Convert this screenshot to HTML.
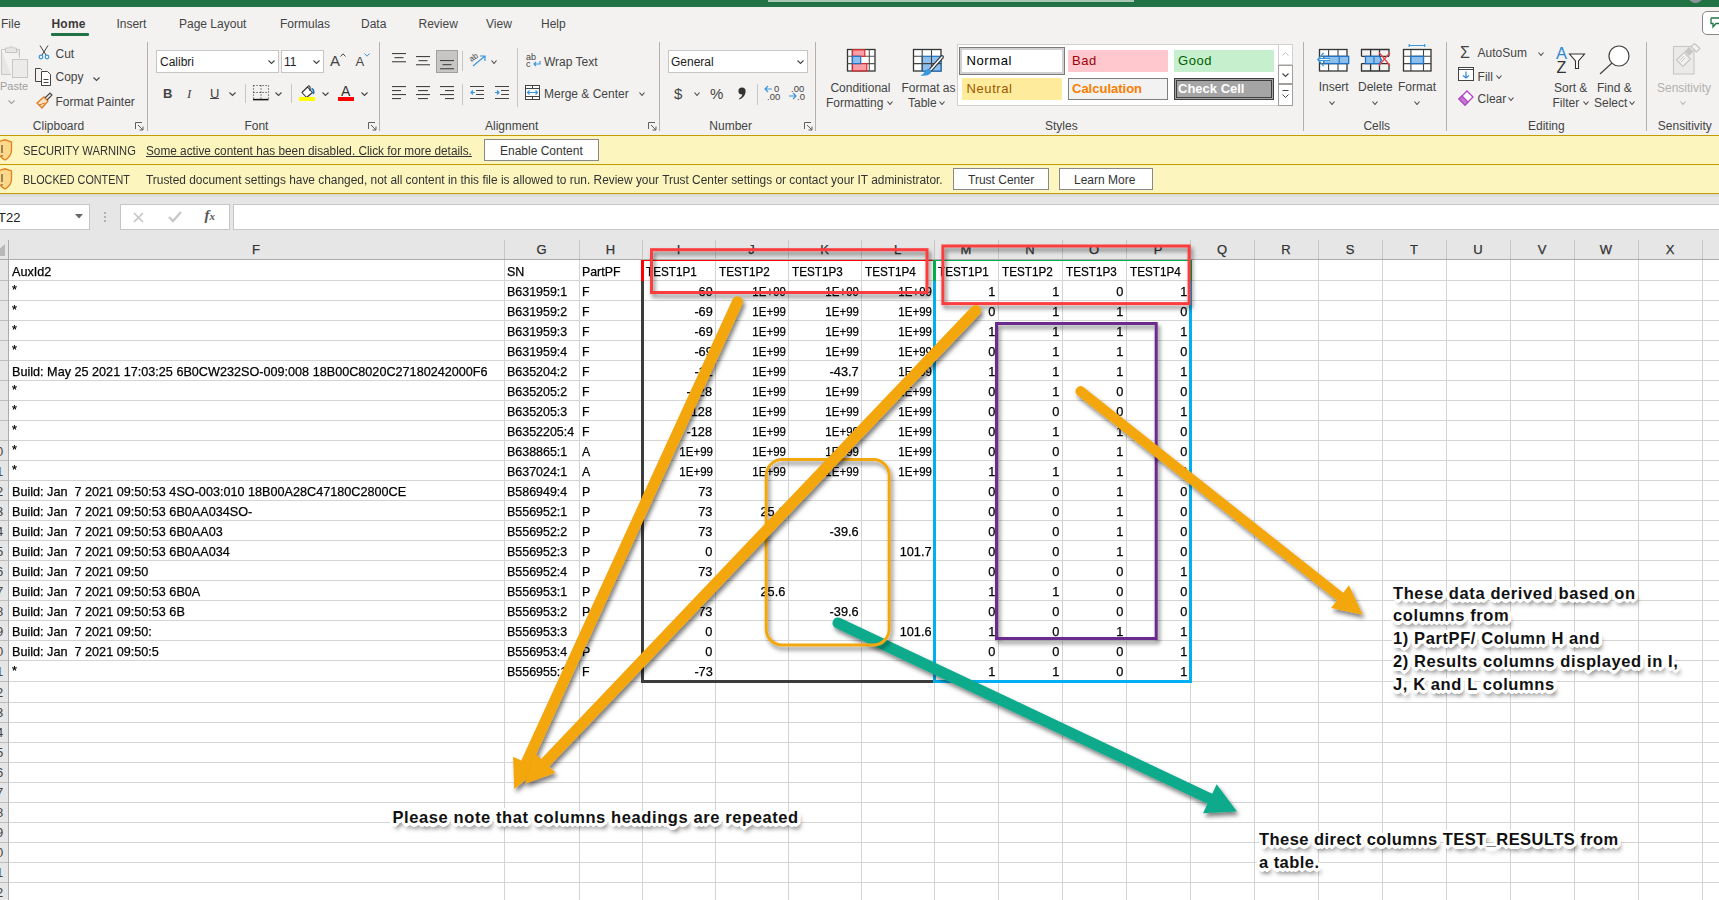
<!DOCTYPE html><html><head><meta charset="utf-8"><style>
*{margin:0;padding:0;box-sizing:border-box}
html,body{width:1719px;height:900px;overflow:hidden;background:#fff;font-family:"Liberation Sans",sans-serif}
.t{position:absolute;white-space:nowrap;line-height:1}
.g{-webkit-text-stroke:0.25px currentColor}
.r{position:absolute}
svg{position:absolute;overflow:visible}
</style></head><body><div class="r" style="left:0px;top:0px;width:1719px;height:7px;background:#217346"></div>
<div class="r" style="left:768px;top:0px;width:366px;height:2px;background:#a9c7b4"></div>
<div class="r" style="left:0px;top:7px;width:1719px;height:1px;background:#fbfbfb"></div>
<div class="r" style="left:1688px;top:-12px;width:15px;height:15px;background:#8d949a;border-radius:50%"></div>
<div class="r" style="left:0px;top:7px;width:1719px;height:128px;background:#f3f2f1"></div>
<div class="t" style="left:1.0px;top:17.8px;font-size:12px;color:#444;font-weight:normal;">File</div>
<div class="t" style="left:51.5px;top:17.8px;font-size:12px;color:#3b3a39;font-weight:bold;letter-spacing:0.2px">Home</div>
<div class="t" style="left:116.4px;top:17.8px;font-size:12px;color:#444;font-weight:normal;">Insert</div>
<div class="t" style="left:179.0px;top:17.8px;font-size:12px;color:#444;font-weight:normal;">Page Layout</div>
<div class="t" style="left:280.0px;top:17.8px;font-size:12px;color:#444;font-weight:normal;">Formulas</div>
<div class="t" style="left:361.0px;top:17.8px;font-size:12px;color:#444;font-weight:normal;">Data</div>
<div class="t" style="left:418.5px;top:17.8px;font-size:12px;color:#444;font-weight:normal;">Review</div>
<div class="t" style="left:486.0px;top:17.8px;font-size:12px;color:#444;font-weight:normal;">View</div>
<div class="t" style="left:541.0px;top:17.8px;font-size:12px;color:#444;font-weight:normal;">Help</div>
<div class="r" style="left:51px;top:33px;width:38px;height:3px;background:#217346;border-radius:1px"></div>
<div class="r" style="left:1702px;top:11px;width:30px;height:24px;background:#fff;border:1.5px solid #8a8886;border-radius:5px"></div>
<svg style="left:1710px;top:17px" width="12" height="12"><path d="M1 1H12M1 1V6.5H3V10L6 6.5H12" stroke="#217346" stroke-width="1.3" fill="none"/></svg>
<div class="r" style="left:147px;top:42px;width:1px;height:89px;background:#b3b0ad"></div>
<div class="r" style="left:379px;top:42px;width:1px;height:89px;background:#b3b0ad"></div>
<div class="r" style="left:659px;top:42px;width:1px;height:89px;background:#b3b0ad"></div>
<div class="r" style="left:815px;top:42px;width:1px;height:89px;background:#b3b0ad"></div>
<div class="r" style="left:1303px;top:42px;width:1px;height:89px;background:#b3b0ad"></div>
<div class="r" style="left:1446px;top:42px;width:1px;height:89px;background:#b3b0ad"></div>
<div class="r" style="left:1646px;top:42px;width:1px;height:89px;background:#b3b0ad"></div>
<div class="t" style="left:32.8px;top:119.8px;font-size:12px;color:#444;font-weight:normal;">Clipboard</div>
<div class="t" style="left:244.4px;top:119.8px;font-size:12px;color:#444;font-weight:normal;">Font</div>
<div class="t" style="left:485.0px;top:119.8px;font-size:12px;color:#444;font-weight:normal;">Alignment</div>
<div class="t" style="left:709.3px;top:119.8px;font-size:12px;color:#444;font-weight:normal;">Number</div>
<div class="t" style="left:1045.0px;top:119.8px;font-size:12px;color:#444;font-weight:normal;">Styles</div>
<div class="t" style="left:1363.4px;top:119.8px;font-size:12px;color:#444;font-weight:normal;">Cells</div>
<div class="t" style="left:1528.0px;top:119.8px;font-size:12px;color:#444;font-weight:normal;">Editing</div>
<div class="t" style="left:1657.8px;top:119.8px;font-size:12px;color:#444;font-weight:normal;">Sensitivity</div>
<svg style="left:135px;top:122px" width="9" height="9"><path d="M0.5 0.5H7M0.5 0.5V7M3 3L8 8M8 4.5V8H4.5" stroke="#605e5c" fill="none" stroke-width="1"/></svg>
<svg style="left:368px;top:122px" width="9" height="9"><path d="M0.5 0.5H7M0.5 0.5V7M3 3L8 8M8 4.5V8H4.5" stroke="#605e5c" fill="none" stroke-width="1"/></svg>
<svg style="left:648px;top:122px" width="9" height="9"><path d="M0.5 0.5H7M0.5 0.5V7M3 3L8 8M8 4.5V8H4.5" stroke="#605e5c" fill="none" stroke-width="1"/></svg>
<svg style="left:803.5px;top:122px" width="9" height="9"><path d="M0.5 0.5H7M0.5 0.5V7M3 3L8 8M8 4.5V8H4.5" stroke="#605e5c" fill="none" stroke-width="1"/></svg>
<svg style="left:0px;top:45px" width="30" height="33"><path d="M1.5 4.5H6M15 4.5H19.5V13M1.5 4.5V29.5H11" stroke="#c8c6c4" fill="#e8e6e4" stroke-width="1"/><path d="M5.5 7.5V3H8.5Q11 0 13.5 3H16.5V7.5Z" stroke="#c8c6c4" fill="#e8e6e4"/><rect x="12.5" y="14.5" width="15" height="18" stroke="#c8c6c4" fill="#edebe9"/></svg>
<div class="t" style="left:0.0px;top:81.2px;font-size:11px;color:#a19f9d;font-weight:normal;">Paste</div>
<svg style="left:8px;top:100px" width="7" height="4"><path d="M0.5 0.5L3.5 3.5L6.5 0.5" stroke="#a19f9d" fill="none" stroke-width="1.1"/></svg>
<svg style="left:38px;top:45px" width="12" height="15"><path d="M2 0.5L8 10M10 0.5L4 10" stroke="#444" stroke-width="1" fill="none"/><circle cx="3" cy="12" r="1.8" stroke="#3a96dd" fill="none" stroke-width="1.2"/><circle cx="9" cy="12" r="1.8" stroke="#3a96dd" fill="none" stroke-width="1.2"/></svg>
<div class="t" style="left:55.5px;top:47.8px;font-size:12px;color:#444;font-weight:normal;">Cut</div>
<svg style="left:35px;top:68px" width="18" height="18"><path d="M0.5 0.5H5.5L7 2M0.5 0.5V13.5H6" stroke="#444" fill="none"/><path d="M6.5 3.5H12.5L15.5 6.5V17.5H6.5Z" stroke="#444" fill="#fff"/><path d="M8.5 11.5H13.5M8.5 14.5H13.5" stroke="#444"/></svg>
<div class="t" style="left:55.5px;top:71.3px;font-size:12px;color:#444;font-weight:normal;">Copy</div>
<svg style="left:93px;top:77px" width="7" height="4"><path d="M0.5 0.5L3.5 3.5L6.5 0.5" stroke="#444" fill="none" stroke-width="1.1"/></svg>
<svg style="left:36px;top:92px" width="17" height="17"><path d="M1 11L8 5L12 9L6 16Z" fill="#fbe3c8" stroke="#e07a1f" stroke-width="1.3"/><path d="M3 13L9 11" stroke="#e07a1f"/><path d="M9 6L14 1L16 3L11 8" stroke="#444" fill="none" stroke-width="1.1"/></svg>
<div class="t" style="left:55.5px;top:95.8px;font-size:12px;color:#444;font-weight:normal;">Format Painter</div>
<div class="r" style="left:156px;top:50px;width:123px;height:23px;background:#fff;border:1px solid #c8c6c4"></div>
<div class="t" style="left:160.0px;top:55.8px;font-size:12px;color:#222;font-weight:normal;">Calibri</div>
<svg style="left:268px;top:60px" width="7" height="4"><path d="M0.5 0.5L3.5 3.5L6.5 0.5" stroke="#444" fill="none" stroke-width="1.1"/></svg>
<div class="r" style="left:281px;top:50px;width:43px;height:23px;background:#fff;border:1px solid #c8c6c4"></div>
<div class="t" style="left:284.0px;top:55.8px;font-size:12px;color:#222;font-weight:normal;">11</div>
<svg style="left:313px;top:60px" width="7" height="4"><path d="M0.5 0.5L3.5 3.5L6.5 0.5" stroke="#444" fill="none" stroke-width="1.1"/></svg>
<div class="t" style="left:330.0px;top:53.3px;font-size:15px;color:#444;font-weight:normal;">A</div>
<svg style="left:340px;top:53px" width="6" height="4"><path d="M0.5 3.5L3 0.8L5.5 3.5" stroke="#444" fill="none"/></svg>
<div class="t" style="left:355.5px;top:55.0px;font-size:13px;color:#444;font-weight:normal;">A</div>
<svg style="left:364px;top:53px" width="6" height="4"><path d="M0.5 0.5L3 3.2L5.5 0.5" stroke="#3a96dd" fill="none"/></svg>
<div class="t" style="left:163.0px;top:87.0px;font-size:13px;color:#444;font-weight:bold;">B</div>
<div class="t" style="left:187.0px;top:87.0px;font-size:13px;color:#444;font-weight:normal;font-style:italic;font-family:'Liberation Serif',serif">I</div>
<div class="t" style="left:210.0px;top:87.0px;font-size:13px;color:#444;font-weight:normal;">U</div>
<div class="r" style="left:210px;top:98px;width:9px;height:1px;background:#444"></div>
<svg style="left:229px;top:92px" width="7" height="4"><path d="M0.5 0.5L3.5 3.5L6.5 0.5" stroke="#444" fill="none" stroke-width="1.1"/></svg>
<div class="r" style="left:245px;top:84px;width:1px;height:19px;background:#c8c6c4"></div>
<svg style="left:253px;top:85px" width="16" height="17"><path d="M0.5 0.5H15.5V13.5M0.5 0.5V13.5M8 0.5V13.5M0.5 7.5H15.5" stroke="#333" stroke-dasharray="1.1 1.9" fill="none" stroke-width="1.1"/><path d="M0 14.6H15.5" stroke="#111" stroke-width="1.5"/></svg>
<svg style="left:275px;top:92px" width="7" height="4"><path d="M0.5 0.5L3.5 3.5L6.5 0.5" stroke="#444" fill="none" stroke-width="1.1"/></svg>
<div class="r" style="left:291px;top:84px;width:1px;height:19px;background:#c8c6c4"></div>
<svg style="left:299px;top:84px" width="17" height="18"><path d="M3 8.5L8.5 3L13.5 8.5L7.5 13.5Z" stroke="#333" fill="#fff" stroke-width="1.1" stroke-linejoin="round"/><path d="M8.5 3Q10 0.5 11 3V7" stroke="#333" fill="none" stroke-width="1.1"/><path d="M12.5 4.5Q15.5 6 14.5 10" stroke="#1f72c4" stroke-width="1.6" fill="none"/><rect x="0" y="13" width="16" height="4" fill="#ffff00"/></svg>
<svg style="left:321.5px;top:92px" width="7" height="4"><path d="M0.5 0.5L3.5 3.5L6.5 0.5" stroke="#444" fill="none" stroke-width="1.1"/></svg>
<div class="t" style="left:341.0px;top:83.6px;font-size:14px;color:#333;font-weight:normal;">A</div>
<div class="r" style="left:338px;top:97px;width:16px;height:4px;background:#ff0000"></div>
<svg style="left:360.5px;top:92px" width="7" height="4"><path d="M0.5 0.5L3.5 3.5L6.5 0.5" stroke="#444" fill="none" stroke-width="1.1"/></svg>
<svg style="left:392px;top:53px" width="16" height="16"><rect x="0" y="0.0" width="14" height="1.1" fill="#444"/><rect x="2.5" y="4.1" width="9" height="1.1" fill="#444"/><rect x="0" y="8.2" width="14" height="1.1" fill="#444"/></svg>
<svg style="left:416px;top:56px" width="16" height="16"><rect x="0" y="0.0" width="14" height="1.1" fill="#444"/><rect x="2.5" y="4.1" width="9" height="1.1" fill="#444"/><rect x="0" y="8.2" width="14" height="1.1" fill="#444"/></svg>
<div class="r" style="left:436px;top:50px;width:22px;height:23px;background:#c8c6c4;border:1px solid #a19f9d"></div>
<svg style="left:440px;top:60px" width="16" height="16"><rect x="0" y="0.0" width="14" height="1.1" fill="#444"/><rect x="2.5" y="4.1" width="9" height="1.1" fill="#444"/><rect x="0" y="8.2" width="14" height="1.1" fill="#444"/></svg>
<div class="r" style="left:462px;top:51px;width:1px;height:20px;background:#c8c6c4"></div>
<svg style="left:470px;top:51px" width="17" height="17"><text x="0" y="9" font-size="8" fill="#444" transform="rotate(-35 4 8)" font-family="Liberation Sans">ab</text><path d="M3 15L15 5M10 5H15V10" stroke="#3a96dd" stroke-width="1.2" fill="none"/></svg>
<svg style="left:491px;top:60px" width="6" height="4"><path d="M0.5 0.5L3.0 3.5L5.5 0.5" stroke="#444" fill="none" stroke-width="1.1"/></svg>
<div class="r" style="left:517px;top:48px;width:1px;height:59px;background:#c8c6c4"></div>
<svg style="left:526px;top:52px" width="16" height="18"><text x="0" y="8" font-size="9" fill="#444" font-family="Liberation Sans">ab</text><text x="0" y="15" font-size="9" fill="#444" font-family="Liberation Sans">c</text><path d="M14 9V12H8M10 10L8 12L10 14" stroke="#3a96dd" stroke-width="1.2" fill="none"/></svg>
<div class="t" style="left:544.0px;top:56.3px;font-size:12px;color:#444;font-weight:normal;">Wrap Text</div>
<svg style="left:392px;top:86px" width="16" height="16"><rect x="0" y="0" width="14" height="1.1" fill="#444"/><rect x="0" y="4" width="9" height="1.1" fill="#444"/><rect x="0" y="8" width="14" height="1.1" fill="#444"/><rect x="0" y="12" width="9" height="1.1" fill="#444"/></svg>
<svg style="left:416px;top:86px" width="16" height="16"><rect x="0" y="0" width="14" height="1.1" fill="#444"/><rect x="2" y="4" width="10" height="1.1" fill="#444"/><rect x="0" y="8" width="14" height="1.1" fill="#444"/><rect x="2" y="12" width="10" height="1.1" fill="#444"/></svg>
<svg style="left:440px;top:86px" width="16" height="16"><rect x="0" y="0" width="14" height="1.1" fill="#444"/><rect x="5" y="4" width="9" height="1.1" fill="#444"/><rect x="0" y="8" width="14" height="1.1" fill="#444"/><rect x="5" y="12" width="9" height="1.1" fill="#444"/></svg>
<div class="r" style="left:462px;top:84px;width:1px;height:21px;background:#c8c6c4"></div>
<svg style="left:470px;top:86px" width="16" height="16"><path d="M0 0.5H14M6 4.5H14M6 8.5H14M0 12.5H14" stroke="#444"/><path d="M5 6.5H1M3 4.5L1 6.5L3 8.5" stroke="#3a96dd" fill="none" stroke-width="1.2"/></svg>
<svg style="left:495px;top:86px" width="16" height="16"><path d="M0 0.5H14M6 4.5H14M6 8.5H14M0 12.5H14" stroke="#444"/><path d="M0 6.5H4M2 4.5L4 6.5L2 8.5" stroke="#3a96dd" fill="none" stroke-width="1.2"/></svg>
<svg style="left:525px;top:85px" width="16" height="16"><rect x="0.5" y="0.5" width="14" height="14" stroke="#444" fill="#fff"/><path d="M0.5 3.5H14.5M0.5 11.5H14.5M7.5 0.5V3.5M7.5 11.5V14.5" stroke="#444"/><path d="M2.5 7.5H12.5M4.5 5.5L2.5 7.5L4.5 9.5M10.5 5.5L12.5 7.5L10.5 9.5" stroke="#3a96dd" fill="none" stroke-width="1.2"/></svg>
<div class="t" style="left:544.0px;top:88.3px;font-size:12px;color:#444;font-weight:normal;">Merge &amp; Center</div>
<svg style="left:639px;top:92px" width="6" height="4"><path d="M0.5 0.5L3.0 3.5L5.5 0.5" stroke="#444" fill="none" stroke-width="1.1"/></svg>
<div class="r" style="left:668px;top:50px;width:140px;height:23px;background:#fff;border:1px solid #c8c6c4"></div>
<div class="t" style="left:671.0px;top:55.8px;font-size:12px;color:#222;font-weight:normal;">General</div>
<svg style="left:797px;top:60px" width="7" height="4"><path d="M0.5 0.5L3.5 3.5L6.5 0.5" stroke="#444" fill="none" stroke-width="1.1"/></svg>
<div class="t" style="left:674.0px;top:86.3px;font-size:15px;color:#444;font-weight:normal;">$</div>
<svg style="left:694px;top:92px" width="6" height="4"><path d="M0.5 0.5L3.0 3.5L5.5 0.5" stroke="#444" fill="none" stroke-width="1.1"/></svg>
<div class="t" style="left:710.0px;top:86.3px;font-size:15px;color:#444;font-weight:normal;">%</div>
<svg style="left:737px;top:86px" width="10" height="14"><circle cx="5" cy="5" r="3.6" fill="#333"/><path d="M8.4 5.5Q8.5 11 2.5 13.5L2 12.5Q5.5 10.5 5.5 7Z" fill="#333"/></svg>
<div class="r" style="left:757px;top:84px;width:1px;height:21px;background:#c8c6c4"></div>
<svg style="left:764px;top:84px" width="17" height="17"><path d="M8 5H1M4 2L1 5L4 8" stroke="#3a96dd" fill="none" stroke-width="1.2"/><text x="10" y="8" font-size="9.5" fill="#444" font-family="Liberation Sans">0</text><text x="3" y="16" font-size="9.5" fill="#444" font-family="Liberation Sans">.00</text></svg>
<svg style="left:789px;top:84px" width="17" height="17"><text x="2" y="8" font-size="9.5" fill="#444" font-family="Liberation Sans">.00</text><path d="M0 12H7M4 9L7 12L4 15" stroke="#3a96dd" fill="none" stroke-width="1.2"/><text x="8" y="16" font-size="9.5" fill="#444" font-family="Liberation Sans">.0</text></svg>
<svg style="left:846px;top:48px" width="31" height="25"><rect x="1.5" y="1.5" width="27.5" height="21.5" fill="#fff" stroke="#333" stroke-width="1.3"/><path d="M1.5 8.3H29M1.5 15.6H29M23.3 1.5V23M6.2 1.5V23" stroke="#555" stroke-width="1.1" fill="none"/><rect x="6.5" y="1.8" width="12.3" height="6.5" fill="#f8a0a6" stroke="#e02a2a" stroke-width="1.2"/><rect x="6.5" y="15.6" width="14.3" height="7.2" fill="#f8a0a6" stroke="#e02a2a" stroke-width="1.2"/><rect x="6.5" y="8.3" width="8.2" height="7.3" fill="#8ec0ee" stroke="#1f72c4" stroke-width="1.2"/></svg>
<div class="t" style="left:830.4px;top:81.5px;font-size:12px;color:#444;font-weight:normal;">Conditional</div>
<div class="t" style="left:826.0px;top:96.8px;font-size:12px;color:#444;font-weight:normal;">Formatting</div>
<svg style="left:887px;top:101px" width="6" height="4"><path d="M0.5 0.5L3.0 3.5L5.5 0.5" stroke="#444" fill="none" stroke-width="1.1"/></svg>
<svg style="left:912px;top:48px" width="32" height="30"><rect x="1.5" y="1.5" width="27.5" height="21.5" fill="#fff" stroke="#333" stroke-width="1.3"/><rect x="10.2" y="8.3" width="18.8" height="14.7" fill="#8ec0ee" stroke="#1f72c4" stroke-width="1.2"/><path d="M1.5 8.3H10.2M1.5 15.6H10.2M10.2 1.5V23M19.5 1.5V8.3M10.2 15.6H29M19.5 8.3V23" stroke="#444" stroke-width="1.1" fill="none"/><path d="M30 9L18.5 22" stroke="#333" stroke-width="3.8" stroke-linecap="round"/><path d="M30 9L18.5 22" stroke="#fff" stroke-width="1.6" stroke-linecap="round"/><path d="M8.5 27.5Q11 27 12.5 24Q14 20.5 17.5 21Q20.5 22.5 18.5 25.5Q15.5 28.5 8.5 27.5Z" fill="#3a96dd"/></svg>
<div class="t" style="left:901.5px;top:81.5px;font-size:12px;color:#444;font-weight:normal;">Format as</div>
<div class="t" style="left:908.0px;top:96.8px;font-size:12px;color:#444;font-weight:normal;">Table</div>
<svg style="left:939px;top:101px" width="6" height="4"><path d="M0.5 0.5L3.0 3.5L5.5 0.5" stroke="#444" fill="none" stroke-width="1.1"/></svg>
<div class="r" style="left:957px;top:44px;width:336px;height:62px;background:#fff;border:1px solid #d2d0ce"></div>
<div class="r" style="left:959px;top:47px;width:106px;height:28px;background:#fff;border:1px solid #7a7a7a;box-shadow:inset 0 0 0 2px #d0d0d0"></div>
<div class="t" style="left:966.5px;top:53.5px;font-size:13px;color:#000;font-weight:normal;letter-spacing:0.6px">Normal</div>
<div class="r" style="left:1068px;top:50px;width:100px;height:22px;background:#ffc7ce"></div>
<div class="t" style="left:1072.0px;top:53.5px;font-size:13px;color:#9c0006;font-weight:normal;letter-spacing:0.6px">Bad</div>
<div class="r" style="left:1174px;top:50px;width:100px;height:22px;background:#c6efce"></div>
<div class="t" style="left:1178.0px;top:53.5px;font-size:13px;color:#006100;font-weight:normal;letter-spacing:0.6px">Good</div>
<div class="r" style="left:962px;top:78px;width:100px;height:22px;background:#ffeb9c"></div>
<div class="t" style="left:966.5px;top:82.0px;font-size:13px;color:#9c5700;font-weight:normal;letter-spacing:0.6px">Neutral</div>
<div class="r" style="left:1068px;top:78px;width:100px;height:22px;background:#f2f2f2;border:1px solid #7f7f7f"></div>
<div class="t" style="left:1072.0px;top:82.0px;font-size:13px;color:#fa7d00;font-weight:bold;">Calculation</div>
<div class="r" style="left:1174px;top:78px;width:100px;height:22px;background:#a5a5a5;border:1px solid #3f3f3f;box-shadow:inset 0 0 0 1px #a5a5a5, inset 0 0 0 2px #3f3f3f"></div>
<div class="t" style="left:1178.0px;top:82.0px;font-size:13px;color:#fff;font-weight:bold;">Check Cell</div>
<div class="r" style="left:1278px;top:44px;width:15px;height:21px;background:#fff;border:1px solid #d2d0ce"></div>
<div class="r" style="left:1278px;top:65px;width:15px;height:19px;background:#fff;border:1px solid #a19f9d"></div>
<div class="r" style="left:1278px;top:84px;width:15px;height:22px;background:#fff;border:1px solid #a19f9d"></div>
<svg style="left:1282px;top:52px" width="7" height="4"><path d="M0.5 3.5L3.5 0.5L6.5 3.5" stroke="#c8c6c4" fill="none"/></svg>
<svg style="left:1282px;top:73px" width="7" height="4"><path d="M0.5 0.5L3.5 3.5L6.5 0.5" stroke="#444" fill="none" stroke-width="1.1"/></svg>
<svg style="left:1282px;top:90px" width="7" height="8"><path d="M0.5 0.5H6.5M0.5 4.5L3.5 7.5L6.5 4.5" stroke="#444" fill="none"/></svg>
<svg style="left:1317px;top:48px" width="34" height="25"><rect x="2.5" y="1.5" width="27.5" height="21.5" fill="#fff" stroke="#333" stroke-width="1.3"/><path d="M11.6 1.5V23M21 1.5V23M2.5 8.3H30M2.5 15.6H30" stroke="#444" stroke-width="1.1" fill="none"/><rect x="6.7" y="8.3" width="25" height="7.3" fill="#8ec0ee" stroke="#1f72c4" stroke-width="1.3"/><path d="M22.2 8.3V15.6" stroke="#1f72c4" stroke-width="1.1"/><path d="M6.7 5L0.8 11.5L6.7 18" stroke="#3a96dd" stroke-width="1.3" fill="none"/><path d="M1 11.5H13" stroke="#3a96dd" stroke-width="3"/><path d="M2.5 11.5H12.5" stroke="#eaf3fb" stroke-width="1"/></svg>
<div class="t" style="left:1318.7px;top:80.8px;font-size:12px;color:#444;font-weight:normal;">Insert</div>
<svg style="left:1329px;top:101px" width="6" height="4"><path d="M0.5 0.5L3.0 3.5L5.5 0.5" stroke="#444" fill="none" stroke-width="1.1"/></svg>
<svg style="left:1360px;top:48px" width="32" height="25"><path d="M1.5 8.3V1.5H29V8.3M1.5 15.6V23H29V15.6M10.6 1.5V23M19.5 1.5V23M1.5 8.3H29M1.5 15.6H29" stroke="#333" stroke-width="1.3" fill="none"/><path d="M5.5 8.3H19.5L21.5 11.95L19.5 15.6H5.5Z" fill="#8ec0ee" stroke="#1f72c4" stroke-width="1.3"/><path d="M14 8.3V15.6" stroke="#1f72c4" stroke-width="1.1"/><path d="M19 4.5L30 17.5M30 4.5L19 17.5" stroke="#e8474a" stroke-width="1.3"/></svg>
<div class="t" style="left:1358.0px;top:80.8px;font-size:12px;color:#444;font-weight:normal;">Delete</div>
<svg style="left:1372px;top:101px" width="6" height="4"><path d="M0.5 0.5L3.0 3.5L5.5 0.5" stroke="#444" fill="none" stroke-width="1.1"/></svg>
<svg style="left:1402px;top:43px" width="31" height="30"><path d="M7.2 2.5H22.7M7.2 1V4M22.7 1V4" stroke="#3a96dd" stroke-width="1.2"/><rect x="1.5" y="6.5" width="27.5" height="21.5" fill="#fff" stroke="#333" stroke-width="1.3"/><path d="M8.9 6.5V28M21.5 6.5V28M1.5 13.3H29M1.5 20.6H29" stroke="#444" stroke-width="1.1" fill="none"/><rect x="8.9" y="13.3" width="12.6" height="7.3" fill="#8ec0ee" stroke="#1f72c4" stroke-width="1.3"/></svg>
<div class="t" style="left:1398.0px;top:80.8px;font-size:12px;color:#444;font-weight:normal;">Format</div>
<svg style="left:1414px;top:101px" width="6" height="4"><path d="M0.5 0.5L3.0 3.5L5.5 0.5" stroke="#444" fill="none" stroke-width="1.1"/></svg>
<div class="t" style="left:1460.0px;top:44.5px;font-size:16px;color:#444;font-weight:normal;">&#931;</div>
<div class="t" style="left:1477.6px;top:47.3px;font-size:12px;color:#444;font-weight:normal;">AutoSum</div>
<svg style="left:1537.5px;top:52px" width="6" height="4"><path d="M0.5 0.5L3.0 3.5L5.5 0.5" stroke="#444" fill="none" stroke-width="1.1"/></svg>
<svg style="left:1458px;top:67px" width="17" height="15"><rect x="0.5" y="0.5" width="15" height="13" fill="#fff" stroke="#444"/><path d="M0.5 2.5H15.5" stroke="#444"/><path d="M8 4.5V11M5 8.5L8 11L11 8.5" stroke="#2b88d8" fill="none" stroke-width="1.2"/></svg>
<div class="t" style="left:1477.6px;top:70.8px;font-size:12px;color:#444;font-weight:normal;">Fill</div>
<svg style="left:1496px;top:75px" width="6" height="4"><path d="M0.5 0.5L3.0 3.5L5.5 0.5" stroke="#444" fill="none" stroke-width="1.1"/></svg>
<svg style="left:1458px;top:90px" width="16" height="16"><path d="M1 9L9 1L15 7L7 15Z" fill="#fff" stroke="#b146c2" stroke-width="1.3"/><path d="M1 9L4 6L10 12L7 15Z" fill="#c27bd0" stroke="#b146c2" stroke-width="1.3"/></svg>
<div class="t" style="left:1477.6px;top:93.3px;font-size:12px;color:#444;font-weight:normal;">Clear</div>
<svg style="left:1507.5px;top:97px" width="6" height="4"><path d="M0.5 0.5L3.0 3.5L5.5 0.5" stroke="#444" fill="none" stroke-width="1.1"/></svg>
<svg style="left:1556px;top:45px" width="31" height="30"><text x="0" y="13.8" font-size="16.5" fill="#2b88d8" font-family="Liberation Sans">A</text><text x="0.5" y="28" font-size="16" fill="#333" font-family="Liberation Sans">Z</text><path d="M13.5 9H28.5L22.5 16V23.5H19.5V16Z" stroke="#333" fill="#fff" stroke-width="1.1"/></svg>
<div class="t" style="left:1554.0px;top:81.5px;font-size:12px;color:#444;font-weight:normal;">Sort &amp;</div>
<div class="t" style="left:1552.5px;top:96.8px;font-size:12px;color:#444;font-weight:normal;">Filter</div>
<svg style="left:1583px;top:101px" width="6" height="4"><path d="M0.5 0.5L3.0 3.5L5.5 0.5" stroke="#444" fill="none" stroke-width="1.1"/></svg>
<svg style="left:1599px;top:45px" width="32" height="30"><circle cx="20" cy="11" r="10" fill="#fff" stroke="#444" stroke-width="1.2"/><path d="M13 18L1 29" stroke="#444" stroke-width="1.2"/></svg>
<div class="t" style="left:1597.0px;top:81.5px;font-size:12px;color:#444;font-weight:normal;">Find &amp;</div>
<div class="t" style="left:1594.0px;top:96.8px;font-size:12px;color:#444;font-weight:normal;">Select</div>
<svg style="left:1628.5px;top:101px" width="6" height="4"><path d="M0.5 0.5L3.0 3.5L5.5 0.5" stroke="#444" fill="none" stroke-width="1.1"/></svg>
<svg style="left:1672px;top:43px" width="32" height="33"><rect x="1.5" y="3.5" width="20.5" height="27.5" fill="#ebeae9" stroke="#c8c6c4" stroke-width="1.1"/><path d="M4.5 17L12 9.5L18.5 16L11 23.5Z" fill="#f3f2f1" stroke="#c8c6c4" stroke-width="1.2"/><path d="M7.5 17.5L12 13M9 19L13.5 14.5" stroke="#c8c6c4"/><path d="M12.5 8.5L17 4L21.5 8.5L17 13Z" fill="#c8c6c4"/><path d="M19 3.5L22.5 0.5L28 5.5L24.5 9Z" fill="#f3f2f1" stroke="#c8c6c4" stroke-width="1.2"/></svg>
<div class="t" style="left:1657.0px;top:81.5px;font-size:12px;color:#b3b0ad;font-weight:normal;">Sensitivity</div>
<svg style="left:1680px;top:101px" width="6" height="4"><path d="M0.5 0.5L3.0 3.5L5.5 0.5" stroke="#b3b0ad" fill="none" stroke-width="1.1"/></svg>
<div class="r" style="left:0px;top:135px;width:1719px;height:59px;background:#fcf5be"></div>
<div class="r" style="left:0px;top:135px;width:1719px;height:1px;background:#c19c00"></div>
<div class="r" style="left:0px;top:164px;width:1719px;height:1px;background:#c19c00"></div>
<div class="r" style="left:0px;top:193px;width:1719px;height:1px;background:#c19c00"></div>
<svg style="left:-3px;top:139px" width="16" height="22"><path d="M0 3L8 0.8L14.5 3V11Q14.5 17.5 8 21Q1.5 17.5 0 11Z" fill="#fbd88c" stroke="#e2821d" stroke-width="1.3"/><path d="M5 6V14M5 16V17.5" stroke="#7d6a3c" stroke-width="1.5"/></svg>
<svg style="left:-3px;top:168px" width="16" height="22"><path d="M0 3L8 0.8L14.5 3V11Q14.5 17.5 8 21Q1.5 17.5 0 11Z" fill="#fbd88c" stroke="#e2821d" stroke-width="1.3"/><path d="M5 6V14M5 16V17.5" stroke="#7d6a3c" stroke-width="1.5"/></svg>
<div class="t" style="left:23.4px;top:144.8px;font-size:12px;color:#333;font-weight:normal;transform:scaleX(0.93);transform-origin:0 0">SECURITY WARNING</div>
<div class="t" style="left:146.0px;top:144.8px;font-size:12px;color:#333;font-weight:normal;text-decoration:underline;transform:scaleX(0.983);transform-origin:0 0">Some active content has been disabled. Click for more details.</div>
<div class="r" style="left:484px;top:139px;width:115px;height:22px;background:#fff;border:1px solid #8a8886"></div>
<div class="t" style="left:500.0px;top:144.8px;font-size:12px;color:#333;font-weight:normal;">Enable Content</div>
<div class="t" style="left:23.4px;top:173.8px;font-size:12px;color:#333;font-weight:normal;transform:scaleX(0.9);transform-origin:0 0">BLOCKED CONTENT</div>
<div class="t" style="left:146.0px;top:173.8px;font-size:12px;color:#333;font-weight:normal;transform:scaleX(0.992);transform-origin:0 0">Trusted document settings have changed, not all content in this file is allowed to run. Review your Trust Center settings or contact your IT administrator.</div>
<div class="r" style="left:953px;top:168px;width:96px;height:22px;background:#fff;border:1px solid #8a8886"></div>
<div class="t" style="left:968.0px;top:173.8px;font-size:12px;color:#333;font-weight:normal;">Trust Center</div>
<div class="r" style="left:1059px;top:168px;width:94px;height:22px;background:#fff;border:1px solid #8a8886"></div>
<div class="t" style="left:1074.0px;top:173.8px;font-size:12px;color:#333;font-weight:normal;">Learn More</div>
<div class="r" style="left:0px;top:194px;width:1719px;height:46px;background:#e6e6e6"></div>
<div class="r" style="left:0px;top:194px;width:1719px;height:4px;background:linear-gradient(#d6d6d6,#e6e6e6)"></div>
<div class="r" style="left:-2px;top:204px;width:92px;height:26px;background:#fff;border:1px solid #c6c6c6"></div>
<div class="t" style="left:-3.0px;top:211.0px;font-size:13px;color:#222;font-weight:normal;">&#8202;T22</div>
<svg style="left:75px;top:214px" width="8" height="5"><path d="M0 0H8L4 4.5Z" fill="#666"/></svg>
<div class="r" style="left:104px;top:212px;width:2px;height:2px;background:#a0a0a0;border-radius:1px"></div>
<div class="r" style="left:104px;top:216px;width:2px;height:2px;background:#a0a0a0;border-radius:1px"></div>
<div class="r" style="left:104px;top:220px;width:2px;height:2px;background:#a0a0a0;border-radius:1px"></div>
<div class="r" style="left:120px;top:204px;width:110px;height:26px;background:#fff;border:1px solid #c6c6c6"></div>
<svg style="left:133px;top:212px" width="10" height="10"><path d="M1 1L10 10M10 1L1 10" stroke="#c4c4c4" stroke-width="1.6"/></svg>
<svg style="left:168px;top:211px" width="14" height="12"><path d="M1 6L5 10L13 1" stroke="#c8c8c8" stroke-width="2.4" fill="none"/></svg>
<div class="t" style="left:204.5px;top:207.8px;font-size:15px;color:#555;font-weight:bold;font-family:'Liberation Serif',serif"><i>f</i><span style="font-size:11px"><i>x</i></span></div>
<div class="r" style="left:233px;top:204px;width:1500px;height:26px;background:#fff;border:1px solid #c6c6c6"></div>
<div class="r" style="left:0px;top:240px;width:1719px;height:19px;background:#e6e6e6"></div>
<div class="r" style="left:0px;top:259px;width:1719px;height:1px;background:#ababab"></div>
<div class="r" style="left:0px;top:260px;width:8px;height:640px;background:#e6e6e6"></div>
<div class="r" style="left:8px;top:240px;width:1px;height:660px;background:#ababab"></div>
<svg style="left:0px;top:244px" width="6" height="14"><path d="M5 0V12H-8Z" fill="#b8b8b8"/></svg>
<div class="r" style="left:9px;top:280px;width:1710px;height:1px;background:#d4d4d4"></div>
<div class="r" style="left:0px;top:280px;width:8px;height:1px;background:#bdbdbd"></div>
<div class="r" style="left:9px;top:300px;width:1710px;height:1px;background:#d4d4d4"></div>
<div class="r" style="left:0px;top:300px;width:8px;height:1px;background:#bdbdbd"></div>
<div class="r" style="left:9px;top:320px;width:1710px;height:1px;background:#d4d4d4"></div>
<div class="r" style="left:0px;top:320px;width:8px;height:1px;background:#bdbdbd"></div>
<div class="r" style="left:9px;top:340px;width:1710px;height:1px;background:#d4d4d4"></div>
<div class="r" style="left:0px;top:340px;width:8px;height:1px;background:#bdbdbd"></div>
<div class="r" style="left:9px;top:360px;width:1710px;height:1px;background:#d4d4d4"></div>
<div class="r" style="left:0px;top:360px;width:8px;height:1px;background:#bdbdbd"></div>
<div class="r" style="left:9px;top:380px;width:1710px;height:1px;background:#d4d4d4"></div>
<div class="r" style="left:0px;top:380px;width:8px;height:1px;background:#bdbdbd"></div>
<div class="r" style="left:9px;top:400px;width:1710px;height:1px;background:#d4d4d4"></div>
<div class="r" style="left:0px;top:400px;width:8px;height:1px;background:#bdbdbd"></div>
<div class="r" style="left:9px;top:420px;width:1710px;height:1px;background:#d4d4d4"></div>
<div class="r" style="left:0px;top:420px;width:8px;height:1px;background:#bdbdbd"></div>
<div class="r" style="left:9px;top:440px;width:1710px;height:1px;background:#d4d4d4"></div>
<div class="r" style="left:0px;top:440px;width:8px;height:1px;background:#bdbdbd"></div>
<div class="r" style="left:9px;top:460px;width:1710px;height:1px;background:#d4d4d4"></div>
<div class="r" style="left:0px;top:460px;width:8px;height:1px;background:#bdbdbd"></div>
<div class="r" style="left:9px;top:480px;width:1710px;height:1px;background:#d4d4d4"></div>
<div class="r" style="left:0px;top:480px;width:8px;height:1px;background:#bdbdbd"></div>
<div class="r" style="left:9px;top:500px;width:1710px;height:1px;background:#d4d4d4"></div>
<div class="r" style="left:0px;top:500px;width:8px;height:1px;background:#bdbdbd"></div>
<div class="r" style="left:9px;top:520px;width:1710px;height:1px;background:#d4d4d4"></div>
<div class="r" style="left:0px;top:520px;width:8px;height:1px;background:#bdbdbd"></div>
<div class="r" style="left:9px;top:540px;width:1710px;height:1px;background:#d4d4d4"></div>
<div class="r" style="left:0px;top:540px;width:8px;height:1px;background:#bdbdbd"></div>
<div class="r" style="left:9px;top:560px;width:1710px;height:1px;background:#d4d4d4"></div>
<div class="r" style="left:0px;top:560px;width:8px;height:1px;background:#bdbdbd"></div>
<div class="r" style="left:9px;top:580px;width:1710px;height:1px;background:#d4d4d4"></div>
<div class="r" style="left:0px;top:580px;width:8px;height:1px;background:#bdbdbd"></div>
<div class="r" style="left:9px;top:600px;width:1710px;height:1px;background:#d4d4d4"></div>
<div class="r" style="left:0px;top:600px;width:8px;height:1px;background:#bdbdbd"></div>
<div class="r" style="left:9px;top:620px;width:1710px;height:1px;background:#d4d4d4"></div>
<div class="r" style="left:0px;top:620px;width:8px;height:1px;background:#bdbdbd"></div>
<div class="r" style="left:9px;top:640px;width:1710px;height:1px;background:#d4d4d4"></div>
<div class="r" style="left:0px;top:640px;width:8px;height:1px;background:#bdbdbd"></div>
<div class="r" style="left:9px;top:660px;width:1710px;height:1px;background:#d4d4d4"></div>
<div class="r" style="left:0px;top:660px;width:8px;height:1px;background:#bdbdbd"></div>
<div class="r" style="left:9px;top:681px;width:1710px;height:1px;background:#d4d4d4"></div>
<div class="r" style="left:0px;top:681px;width:8px;height:1px;background:#bdbdbd"></div>
<div class="r" style="left:9px;top:702px;width:1710px;height:1px;background:#d4d4d4"></div>
<div class="r" style="left:0px;top:702px;width:8px;height:1px;background:#bdbdbd"></div>
<div class="r" style="left:9px;top:722px;width:1710px;height:1px;background:#d4d4d4"></div>
<div class="r" style="left:0px;top:722px;width:8px;height:1px;background:#bdbdbd"></div>
<div class="r" style="left:9px;top:742px;width:1710px;height:1px;background:#d4d4d4"></div>
<div class="r" style="left:0px;top:742px;width:8px;height:1px;background:#bdbdbd"></div>
<div class="r" style="left:9px;top:762px;width:1710px;height:1px;background:#d4d4d4"></div>
<div class="r" style="left:0px;top:762px;width:8px;height:1px;background:#bdbdbd"></div>
<div class="r" style="left:9px;top:782px;width:1710px;height:1px;background:#d4d4d4"></div>
<div class="r" style="left:0px;top:782px;width:8px;height:1px;background:#bdbdbd"></div>
<div class="r" style="left:9px;top:802px;width:1710px;height:1px;background:#d4d4d4"></div>
<div class="r" style="left:0px;top:802px;width:8px;height:1px;background:#bdbdbd"></div>
<div class="r" style="left:9px;top:822px;width:1710px;height:1px;background:#d4d4d4"></div>
<div class="r" style="left:0px;top:822px;width:8px;height:1px;background:#bdbdbd"></div>
<div class="r" style="left:9px;top:842px;width:1710px;height:1px;background:#d4d4d4"></div>
<div class="r" style="left:0px;top:842px;width:8px;height:1px;background:#bdbdbd"></div>
<div class="r" style="left:9px;top:862px;width:1710px;height:1px;background:#d4d4d4"></div>
<div class="r" style="left:0px;top:862px;width:8px;height:1px;background:#bdbdbd"></div>
<div class="r" style="left:9px;top:882px;width:1710px;height:1px;background:#d4d4d4"></div>
<div class="r" style="left:0px;top:882px;width:8px;height:1px;background:#bdbdbd"></div>
<div class="r" style="left:504px;top:260px;width:1px;height:640px;background:#d4d4d4"></div>
<div class="r" style="left:504px;top:240px;width:1px;height:19px;background:#c6c6c6"></div>
<div class="t g" style="left:256.0px;top:242.6px;font-size:13px;color:#333;font-weight:normal;transform:translateX(-50%)">F</div>
<div class="r" style="left:579px;top:260px;width:1px;height:640px;background:#d4d4d4"></div>
<div class="r" style="left:579px;top:240px;width:1px;height:19px;background:#c6c6c6"></div>
<div class="t g" style="left:541.5px;top:242.6px;font-size:13px;color:#333;font-weight:normal;transform:translateX(-50%)">G</div>
<div class="r" style="left:642px;top:260px;width:1px;height:640px;background:#d4d4d4"></div>
<div class="r" style="left:642px;top:240px;width:1px;height:19px;background:#c6c6c6"></div>
<div class="t g" style="left:610.5px;top:242.6px;font-size:13px;color:#333;font-weight:normal;transform:translateX(-50%)">H</div>
<div class="r" style="left:715px;top:260px;width:1px;height:640px;background:#d4d4d4"></div>
<div class="r" style="left:715px;top:240px;width:1px;height:19px;background:#c6c6c6"></div>
<div class="t g" style="left:678.5px;top:242.6px;font-size:13px;color:#333;font-weight:normal;transform:translateX(-50%)">I</div>
<div class="r" style="left:788px;top:260px;width:1px;height:640px;background:#d4d4d4"></div>
<div class="r" style="left:788px;top:240px;width:1px;height:19px;background:#c6c6c6"></div>
<div class="t g" style="left:751.5px;top:242.6px;font-size:13px;color:#333;font-weight:normal;transform:translateX(-50%)">J</div>
<div class="r" style="left:861px;top:260px;width:1px;height:640px;background:#d4d4d4"></div>
<div class="r" style="left:861px;top:240px;width:1px;height:19px;background:#c6c6c6"></div>
<div class="t g" style="left:824.5px;top:242.6px;font-size:13px;color:#333;font-weight:normal;transform:translateX(-50%)">K</div>
<div class="r" style="left:934px;top:260px;width:1px;height:640px;background:#d4d4d4"></div>
<div class="r" style="left:934px;top:240px;width:1px;height:19px;background:#c6c6c6"></div>
<div class="t g" style="left:897.5px;top:242.6px;font-size:13px;color:#333;font-weight:normal;transform:translateX(-50%)">L</div>
<div class="r" style="left:998px;top:260px;width:1px;height:640px;background:#d4d4d4"></div>
<div class="r" style="left:998px;top:240px;width:1px;height:19px;background:#c6c6c6"></div>
<div class="t g" style="left:966.0px;top:242.6px;font-size:13px;color:#333;font-weight:normal;transform:translateX(-50%)">M</div>
<div class="r" style="left:1062px;top:260px;width:1px;height:640px;background:#d4d4d4"></div>
<div class="r" style="left:1062px;top:240px;width:1px;height:19px;background:#c6c6c6"></div>
<div class="t g" style="left:1030.0px;top:242.6px;font-size:13px;color:#333;font-weight:normal;transform:translateX(-50%)">N</div>
<div class="r" style="left:1126px;top:260px;width:1px;height:640px;background:#d4d4d4"></div>
<div class="r" style="left:1126px;top:240px;width:1px;height:19px;background:#c6c6c6"></div>
<div class="t g" style="left:1094.0px;top:242.6px;font-size:13px;color:#333;font-weight:normal;transform:translateX(-50%)">O</div>
<div class="r" style="left:1190px;top:260px;width:1px;height:640px;background:#d4d4d4"></div>
<div class="r" style="left:1190px;top:240px;width:1px;height:19px;background:#c6c6c6"></div>
<div class="t g" style="left:1158.0px;top:242.6px;font-size:13px;color:#333;font-weight:normal;transform:translateX(-50%)">P</div>
<div class="r" style="left:1254px;top:260px;width:1px;height:640px;background:#d4d4d4"></div>
<div class="r" style="left:1254px;top:240px;width:1px;height:19px;background:#c6c6c6"></div>
<div class="t g" style="left:1222.0px;top:242.6px;font-size:13px;color:#333;font-weight:normal;transform:translateX(-50%)">Q</div>
<div class="r" style="left:1318px;top:260px;width:1px;height:640px;background:#d4d4d4"></div>
<div class="r" style="left:1318px;top:240px;width:1px;height:19px;background:#c6c6c6"></div>
<div class="t g" style="left:1286.0px;top:242.6px;font-size:13px;color:#333;font-weight:normal;transform:translateX(-50%)">R</div>
<div class="r" style="left:1382px;top:260px;width:1px;height:640px;background:#d4d4d4"></div>
<div class="r" style="left:1382px;top:240px;width:1px;height:19px;background:#c6c6c6"></div>
<div class="t g" style="left:1350.0px;top:242.6px;font-size:13px;color:#333;font-weight:normal;transform:translateX(-50%)">S</div>
<div class="r" style="left:1446px;top:260px;width:1px;height:640px;background:#d4d4d4"></div>
<div class="r" style="left:1446px;top:240px;width:1px;height:19px;background:#c6c6c6"></div>
<div class="t g" style="left:1414.0px;top:242.6px;font-size:13px;color:#333;font-weight:normal;transform:translateX(-50%)">T</div>
<div class="r" style="left:1510px;top:260px;width:1px;height:640px;background:#d4d4d4"></div>
<div class="r" style="left:1510px;top:240px;width:1px;height:19px;background:#c6c6c6"></div>
<div class="t g" style="left:1478.0px;top:242.6px;font-size:13px;color:#333;font-weight:normal;transform:translateX(-50%)">U</div>
<div class="r" style="left:1574px;top:260px;width:1px;height:640px;background:#d4d4d4"></div>
<div class="r" style="left:1574px;top:240px;width:1px;height:19px;background:#c6c6c6"></div>
<div class="t g" style="left:1542.0px;top:242.6px;font-size:13px;color:#333;font-weight:normal;transform:translateX(-50%)">V</div>
<div class="r" style="left:1638px;top:260px;width:1px;height:640px;background:#d4d4d4"></div>
<div class="r" style="left:1638px;top:240px;width:1px;height:19px;background:#c6c6c6"></div>
<div class="t g" style="left:1606.0px;top:242.6px;font-size:13px;color:#333;font-weight:normal;transform:translateX(-50%)">W</div>
<div class="r" style="left:1702px;top:260px;width:1px;height:640px;background:#d4d4d4"></div>
<div class="r" style="left:1702px;top:240px;width:1px;height:19px;background:#c6c6c6"></div>
<div class="t g" style="left:1670.0px;top:242.6px;font-size:13px;color:#333;font-weight:normal;transform:translateX(-50%)">X</div>
<div class="r" style="left:1766px;top:260px;width:1px;height:640px;background:#d4d4d4"></div>
<div class="r" style="left:1766px;top:240px;width:1px;height:19px;background:#c6c6c6"></div>
<div class="t g" style="left:1734.0px;top:242.6px;font-size:13px;color:#333;font-weight:normal;transform:translateX(-50%)">Y</div>
<div class="t" style="left:-4.0px;top:445.0px;font-size:13px;color:#444;font-weight:normal;">0</div>
<div class="t" style="left:-4.0px;top:465.0px;font-size:13px;color:#444;font-weight:normal;">1</div>
<div class="t" style="left:-4.0px;top:485.0px;font-size:13px;color:#444;font-weight:normal;">2</div>
<div class="t" style="left:-4.0px;top:505.0px;font-size:13px;color:#444;font-weight:normal;">3</div>
<div class="t" style="left:-4.0px;top:525.0px;font-size:13px;color:#444;font-weight:normal;">4</div>
<div class="t" style="left:-4.0px;top:545.0px;font-size:13px;color:#444;font-weight:normal;">5</div>
<div class="t" style="left:-4.0px;top:565.0px;font-size:13px;color:#444;font-weight:normal;">6</div>
<div class="t" style="left:-4.0px;top:585.0px;font-size:13px;color:#444;font-weight:normal;">7</div>
<div class="t" style="left:-4.0px;top:605.0px;font-size:13px;color:#444;font-weight:normal;">8</div>
<div class="t" style="left:-4.0px;top:625.0px;font-size:13px;color:#444;font-weight:normal;">9</div>
<div class="t" style="left:-4.0px;top:645.0px;font-size:13px;color:#444;font-weight:normal;">0</div>
<div class="t" style="left:-4.0px;top:665.0px;font-size:13px;color:#444;font-weight:normal;">1</div>
<div class="t" style="left:-4.0px;top:686.0px;font-size:13px;color:#444;font-weight:normal;">2</div>
<div class="t" style="left:-4.0px;top:706.0px;font-size:13px;color:#444;font-weight:normal;">3</div>
<div class="t" style="left:-4.0px;top:726.0px;font-size:13px;color:#444;font-weight:normal;">4</div>
<div class="t" style="left:-4.0px;top:746.0px;font-size:13px;color:#444;font-weight:normal;">5</div>
<div class="t" style="left:-4.0px;top:766.0px;font-size:13px;color:#444;font-weight:normal;">6</div>
<div class="t" style="left:-4.0px;top:786.0px;font-size:13px;color:#444;font-weight:normal;">7</div>
<div class="t" style="left:-4.0px;top:806.0px;font-size:13px;color:#444;font-weight:normal;">8</div>
<div class="t" style="left:-4.0px;top:826.0px;font-size:13px;color:#444;font-weight:normal;">9</div>
<div class="t" style="left:-4.0px;top:846.0px;font-size:13px;color:#444;font-weight:normal;">0</div>
<div class="t" style="left:-4.0px;top:866.0px;font-size:13px;color:#444;font-weight:normal;">1</div>
<div class="t" style="left:-4.0px;top:886.0px;font-size:13px;color:#444;font-weight:normal;">2</div>
<div class="t g" style="left:11.5px;top:264.5px;font-size:13px;color:#000;font-weight:normal;transform:scaleX(0.972);transform-origin:0 0">AuxId2</div>
<div class="t g" style="left:506.5px;top:264.5px;font-size:13px;color:#000;font-weight:normal;transform:scaleX(0.958);transform-origin:0 0">SN</div>
<div class="t g" style="left:582.0px;top:264.5px;font-size:13px;color:#000;font-weight:normal;transform:scaleX(0.95);transform-origin:0 0">PartPF</div>
<div class="t g" style="left:11.5px;top:283.0px;font-size:13px;color:#000;font-weight:normal;transform:scaleX(0.972);transform-origin:0 0">*</div>
<div class="t g" style="left:506.5px;top:284.5px;font-size:13px;color:#000;font-weight:normal;transform:scaleX(0.958);transform-origin:0 0">B631959:1</div>
<div class="t g" style="left:582.0px;top:284.5px;font-size:13px;color:#000;font-weight:normal;transform:scaleX(0.95);transform-origin:0 0">F</div>
<div class="t g" style="left:11.5px;top:303.0px;font-size:13px;color:#000;font-weight:normal;transform:scaleX(0.972);transform-origin:0 0">*</div>
<div class="t g" style="left:506.5px;top:304.5px;font-size:13px;color:#000;font-weight:normal;transform:scaleX(0.958);transform-origin:0 0">B631959:2</div>
<div class="t g" style="left:582.0px;top:304.5px;font-size:13px;color:#000;font-weight:normal;transform:scaleX(0.95);transform-origin:0 0">F</div>
<div class="t g" style="left:11.5px;top:323.0px;font-size:13px;color:#000;font-weight:normal;transform:scaleX(0.972);transform-origin:0 0">*</div>
<div class="t g" style="left:506.5px;top:324.5px;font-size:13px;color:#000;font-weight:normal;transform:scaleX(0.958);transform-origin:0 0">B631959:3</div>
<div class="t g" style="left:582.0px;top:324.5px;font-size:13px;color:#000;font-weight:normal;transform:scaleX(0.95);transform-origin:0 0">F</div>
<div class="t g" style="left:11.5px;top:343.0px;font-size:13px;color:#000;font-weight:normal;transform:scaleX(0.972);transform-origin:0 0">*</div>
<div class="t g" style="left:506.5px;top:344.5px;font-size:13px;color:#000;font-weight:normal;transform:scaleX(0.958);transform-origin:0 0">B631959:4</div>
<div class="t g" style="left:582.0px;top:344.5px;font-size:13px;color:#000;font-weight:normal;transform:scaleX(0.95);transform-origin:0 0">F</div>
<div class="t g" style="left:11.5px;top:364.5px;font-size:13px;color:#000;font-weight:normal;transform:scaleX(0.972);transform-origin:0 0">Build: May 25 2021 17:03:25 6B0CW232SO-009:008 18B00C8020C27180242000F6</div>
<div class="t g" style="left:506.5px;top:364.5px;font-size:13px;color:#000;font-weight:normal;transform:scaleX(0.958);transform-origin:0 0">B635204:2</div>
<div class="t g" style="left:582.0px;top:364.5px;font-size:13px;color:#000;font-weight:normal;transform:scaleX(0.95);transform-origin:0 0">F</div>
<div class="t g" style="left:11.5px;top:383.0px;font-size:13px;color:#000;font-weight:normal;transform:scaleX(0.972);transform-origin:0 0">*</div>
<div class="t g" style="left:506.5px;top:384.5px;font-size:13px;color:#000;font-weight:normal;transform:scaleX(0.958);transform-origin:0 0">B635205:2</div>
<div class="t g" style="left:582.0px;top:384.5px;font-size:13px;color:#000;font-weight:normal;transform:scaleX(0.95);transform-origin:0 0">F</div>
<div class="t g" style="left:11.5px;top:403.0px;font-size:13px;color:#000;font-weight:normal;transform:scaleX(0.972);transform-origin:0 0">*</div>
<div class="t g" style="left:506.5px;top:404.5px;font-size:13px;color:#000;font-weight:normal;transform:scaleX(0.958);transform-origin:0 0">B635205:3</div>
<div class="t g" style="left:582.0px;top:404.5px;font-size:13px;color:#000;font-weight:normal;transform:scaleX(0.95);transform-origin:0 0">F</div>
<div class="t g" style="left:11.5px;top:423.0px;font-size:13px;color:#000;font-weight:normal;transform:scaleX(0.972);transform-origin:0 0">*</div>
<div class="t g" style="left:506.5px;top:424.5px;font-size:13px;color:#000;font-weight:normal;transform:scaleX(0.958);transform-origin:0 0">B6352205:4</div>
<div class="t g" style="left:582.0px;top:424.5px;font-size:13px;color:#000;font-weight:normal;transform:scaleX(0.95);transform-origin:0 0">F</div>
<div class="t g" style="left:11.5px;top:443.0px;font-size:13px;color:#000;font-weight:normal;transform:scaleX(0.972);transform-origin:0 0">*</div>
<div class="t g" style="left:506.5px;top:444.5px;font-size:13px;color:#000;font-weight:normal;transform:scaleX(0.958);transform-origin:0 0">B638865:1</div>
<div class="t g" style="left:582.0px;top:444.5px;font-size:13px;color:#000;font-weight:normal;transform:scaleX(0.95);transform-origin:0 0">A</div>
<div class="t g" style="left:11.5px;top:463.0px;font-size:13px;color:#000;font-weight:normal;transform:scaleX(0.972);transform-origin:0 0">*</div>
<div class="t g" style="left:506.5px;top:464.5px;font-size:13px;color:#000;font-weight:normal;transform:scaleX(0.958);transform-origin:0 0">B637024:1</div>
<div class="t g" style="left:582.0px;top:464.5px;font-size:13px;color:#000;font-weight:normal;transform:scaleX(0.95);transform-origin:0 0">A</div>
<div class="t g" style="left:11.5px;top:484.5px;font-size:13px;color:#000;font-weight:normal;transform:scaleX(0.972);transform-origin:0 0">Build: Jan&nbsp; 7 2021 09:50:53 4SO-003:010 18B00A28C47180C2800CE</div>
<div class="t g" style="left:506.5px;top:484.5px;font-size:13px;color:#000;font-weight:normal;transform:scaleX(0.958);transform-origin:0 0">B586949:4</div>
<div class="t g" style="left:582.0px;top:484.5px;font-size:13px;color:#000;font-weight:normal;transform:scaleX(0.95);transform-origin:0 0">P</div>
<div class="t g" style="left:11.5px;top:504.5px;font-size:13px;color:#000;font-weight:normal;transform:scaleX(0.972);transform-origin:0 0">Build: Jan&nbsp; 7 2021 09:50:53 6B0AA034SO-</div>
<div class="t g" style="left:506.5px;top:504.5px;font-size:13px;color:#000;font-weight:normal;transform:scaleX(0.958);transform-origin:0 0">B556952:1</div>
<div class="t g" style="left:582.0px;top:504.5px;font-size:13px;color:#000;font-weight:normal;transform:scaleX(0.95);transform-origin:0 0">P</div>
<div class="t g" style="left:11.5px;top:524.5px;font-size:13px;color:#000;font-weight:normal;transform:scaleX(0.972);transform-origin:0 0">Build: Jan&nbsp; 7 2021 09:50:53 6B0AA03</div>
<div class="t g" style="left:506.5px;top:524.5px;font-size:13px;color:#000;font-weight:normal;transform:scaleX(0.958);transform-origin:0 0">B556952:2</div>
<div class="t g" style="left:582.0px;top:524.5px;font-size:13px;color:#000;font-weight:normal;transform:scaleX(0.95);transform-origin:0 0">P</div>
<div class="t g" style="left:11.5px;top:544.5px;font-size:13px;color:#000;font-weight:normal;transform:scaleX(0.972);transform-origin:0 0">Build: Jan&nbsp; 7 2021 09:50:53 6B0AA034</div>
<div class="t g" style="left:506.5px;top:544.5px;font-size:13px;color:#000;font-weight:normal;transform:scaleX(0.958);transform-origin:0 0">B556952:3</div>
<div class="t g" style="left:582.0px;top:544.5px;font-size:13px;color:#000;font-weight:normal;transform:scaleX(0.95);transform-origin:0 0">P</div>
<div class="t g" style="left:11.5px;top:564.5px;font-size:13px;color:#000;font-weight:normal;transform:scaleX(0.972);transform-origin:0 0">Build: Jan&nbsp; 7 2021 09:50</div>
<div class="t g" style="left:506.5px;top:564.5px;font-size:13px;color:#000;font-weight:normal;transform:scaleX(0.958);transform-origin:0 0">B556952:4</div>
<div class="t g" style="left:582.0px;top:564.5px;font-size:13px;color:#000;font-weight:normal;transform:scaleX(0.95);transform-origin:0 0">P</div>
<div class="t g" style="left:11.5px;top:584.5px;font-size:13px;color:#000;font-weight:normal;transform:scaleX(0.972);transform-origin:0 0">Build: Jan&nbsp; 7 2021 09:50:53 6B0A</div>
<div class="t g" style="left:506.5px;top:584.5px;font-size:13px;color:#000;font-weight:normal;transform:scaleX(0.958);transform-origin:0 0">B556953:1</div>
<div class="t g" style="left:582.0px;top:584.5px;font-size:13px;color:#000;font-weight:normal;transform:scaleX(0.95);transform-origin:0 0">P</div>
<div class="t g" style="left:11.5px;top:604.5px;font-size:13px;color:#000;font-weight:normal;transform:scaleX(0.972);transform-origin:0 0">Build: Jan&nbsp; 7 2021 09:50:53 6B</div>
<div class="t g" style="left:506.5px;top:604.5px;font-size:13px;color:#000;font-weight:normal;transform:scaleX(0.958);transform-origin:0 0">B556953:2</div>
<div class="t g" style="left:582.0px;top:604.5px;font-size:13px;color:#000;font-weight:normal;transform:scaleX(0.95);transform-origin:0 0">P</div>
<div class="t g" style="left:11.5px;top:624.5px;font-size:13px;color:#000;font-weight:normal;transform:scaleX(0.972);transform-origin:0 0">Build: Jan&nbsp; 7 2021 09:50:</div>
<div class="t g" style="left:506.5px;top:624.5px;font-size:13px;color:#000;font-weight:normal;transform:scaleX(0.958);transform-origin:0 0">B556953:3</div>
<div class="t g" style="left:11.5px;top:644.5px;font-size:13px;color:#000;font-weight:normal;transform:scaleX(0.972);transform-origin:0 0">Build: Jan&nbsp; 7 2021 09:50:5</div>
<div class="t g" style="left:506.5px;top:644.5px;font-size:13px;color:#000;font-weight:normal;transform:scaleX(0.958);transform-origin:0 0">B556953:4</div>
<div class="t g" style="left:582.0px;top:644.5px;font-size:13px;color:#000;font-weight:normal;transform:scaleX(0.95);transform-origin:0 0">P</div>
<div class="t g" style="left:11.5px;top:663.5px;font-size:13px;color:#000;font-weight:normal;transform:scaleX(0.972);transform-origin:0 0">*</div>
<div class="t g" style="left:506.5px;top:665.0px;font-size:13px;color:#000;font-weight:normal;transform:scaleX(0.958);transform-origin:0 0">B556955:1</div>
<div class="t g" style="left:582.0px;top:665.0px;font-size:13px;color:#000;font-weight:normal;transform:scaleX(0.95);transform-origin:0 0">F</div>
<div class="t g" style="left:645.5px;top:264.5px;font-size:13px;color:#000;font-weight:normal;transform:scaleX(0.90);transform-origin:0 0">TEST1P1</div>
<div class="t g" style="left:718.5px;top:264.5px;font-size:13px;color:#000;font-weight:normal;transform:scaleX(0.90);transform-origin:0 0">TEST1P2</div>
<div class="t g" style="left:791.5px;top:264.5px;font-size:13px;color:#000;font-weight:normal;transform:scaleX(0.90);transform-origin:0 0">TEST1P3</div>
<div class="t g" style="left:864.5px;top:264.5px;font-size:13px;color:#000;font-weight:normal;transform:scaleX(0.90);transform-origin:0 0">TEST1P4</div>
<div class="t g" style="left:937.5px;top:264.5px;font-size:13px;color:#000;font-weight:normal;transform:scaleX(0.90);transform-origin:0 0">TEST1P1</div>
<div class="t g" style="left:1001.5px;top:264.5px;font-size:13px;color:#000;font-weight:normal;transform:scaleX(0.90);transform-origin:0 0">TEST1P2</div>
<div class="t g" style="left:1065.5px;top:264.5px;font-size:13px;color:#000;font-weight:normal;transform:scaleX(0.90);transform-origin:0 0">TEST1P3</div>
<div class="t g" style="left:1129.5px;top:264.5px;font-size:13px;color:#000;font-weight:normal;transform:scaleX(0.90);transform-origin:0 0">TEST1P4</div>
<div class="t g" style="right:1006.5px;top:284.5px;font-size:13px;color:#000;transform:scaleX(0.98);transform-origin:100% 0">-69</div>
<div class="t g" style="right:933.5px;top:284.5px;font-size:13px;color:#000;transform:scaleX(0.885);transform-origin:100% 0">1E+99</div>
<div class="t g" style="right:860.5px;top:284.5px;font-size:13px;color:#000;transform:scaleX(0.885);transform-origin:100% 0">1E+99</div>
<div class="t g" style="right:787.5px;top:284.5px;font-size:13px;color:#000;transform:scaleX(0.885);transform-origin:100% 0">1E+99</div>
<div class="t g" style="right:723.5px;top:284.5px;font-size:13px;color:#000;transform:scaleX(0.98);transform-origin:100% 0">1</div>
<div class="t g" style="right:659.5px;top:284.5px;font-size:13px;color:#000;transform:scaleX(0.98);transform-origin:100% 0">1</div>
<div class="t g" style="right:595.5px;top:284.5px;font-size:13px;color:#000;transform:scaleX(0.98);transform-origin:100% 0">0</div>
<div class="t g" style="right:531.5px;top:284.5px;font-size:13px;color:#000;transform:scaleX(0.98);transform-origin:100% 0">1</div>
<div class="t g" style="right:1006.5px;top:304.5px;font-size:13px;color:#000;transform:scaleX(0.98);transform-origin:100% 0">-69</div>
<div class="t g" style="right:933.5px;top:304.5px;font-size:13px;color:#000;transform:scaleX(0.885);transform-origin:100% 0">1E+99</div>
<div class="t g" style="right:860.5px;top:304.5px;font-size:13px;color:#000;transform:scaleX(0.885);transform-origin:100% 0">1E+99</div>
<div class="t g" style="right:787.5px;top:304.5px;font-size:13px;color:#000;transform:scaleX(0.885);transform-origin:100% 0">1E+99</div>
<div class="t g" style="right:723.5px;top:304.5px;font-size:13px;color:#000;transform:scaleX(0.98);transform-origin:100% 0">0</div>
<div class="t g" style="right:659.5px;top:304.5px;font-size:13px;color:#000;transform:scaleX(0.98);transform-origin:100% 0">1</div>
<div class="t g" style="right:595.5px;top:304.5px;font-size:13px;color:#000;transform:scaleX(0.98);transform-origin:100% 0">1</div>
<div class="t g" style="right:531.5px;top:304.5px;font-size:13px;color:#000;transform:scaleX(0.98);transform-origin:100% 0">0</div>
<div class="t g" style="right:1006.5px;top:324.5px;font-size:13px;color:#000;transform:scaleX(0.98);transform-origin:100% 0">-69</div>
<div class="t g" style="right:933.5px;top:324.5px;font-size:13px;color:#000;transform:scaleX(0.885);transform-origin:100% 0">1E+99</div>
<div class="t g" style="right:860.5px;top:324.5px;font-size:13px;color:#000;transform:scaleX(0.885);transform-origin:100% 0">1E+99</div>
<div class="t g" style="right:787.5px;top:324.5px;font-size:13px;color:#000;transform:scaleX(0.885);transform-origin:100% 0">1E+99</div>
<div class="t g" style="right:723.5px;top:324.5px;font-size:13px;color:#000;transform:scaleX(0.98);transform-origin:100% 0">1</div>
<div class="t g" style="right:659.5px;top:324.5px;font-size:13px;color:#000;transform:scaleX(0.98);transform-origin:100% 0">1</div>
<div class="t g" style="right:595.5px;top:324.5px;font-size:13px;color:#000;transform:scaleX(0.98);transform-origin:100% 0">1</div>
<div class="t g" style="right:531.5px;top:324.5px;font-size:13px;color:#000;transform:scaleX(0.98);transform-origin:100% 0">1</div>
<div class="t g" style="right:1006.5px;top:344.5px;font-size:13px;color:#000;transform:scaleX(0.98);transform-origin:100% 0">-69</div>
<div class="t g" style="right:933.5px;top:344.5px;font-size:13px;color:#000;transform:scaleX(0.885);transform-origin:100% 0">1E+99</div>
<div class="t g" style="right:860.5px;top:344.5px;font-size:13px;color:#000;transform:scaleX(0.885);transform-origin:100% 0">1E+99</div>
<div class="t g" style="right:787.5px;top:344.5px;font-size:13px;color:#000;transform:scaleX(0.885);transform-origin:100% 0">1E+99</div>
<div class="t g" style="right:723.5px;top:344.5px;font-size:13px;color:#000;transform:scaleX(0.98);transform-origin:100% 0">0</div>
<div class="t g" style="right:659.5px;top:344.5px;font-size:13px;color:#000;transform:scaleX(0.98);transform-origin:100% 0">1</div>
<div class="t g" style="right:595.5px;top:344.5px;font-size:13px;color:#000;transform:scaleX(0.98);transform-origin:100% 0">1</div>
<div class="t g" style="right:531.5px;top:344.5px;font-size:13px;color:#000;transform:scaleX(0.98);transform-origin:100% 0">0</div>
<div class="t g" style="right:1006.5px;top:364.5px;font-size:13px;color:#000;transform:scaleX(0.98);transform-origin:100% 0">-12</div>
<div class="t g" style="right:933.5px;top:364.5px;font-size:13px;color:#000;transform:scaleX(0.885);transform-origin:100% 0">1E+99</div>
<div class="t g" style="right:860.5px;top:364.5px;font-size:13px;color:#000;transform:scaleX(0.98);transform-origin:100% 0">-43.7</div>
<div class="t g" style="right:787.5px;top:364.5px;font-size:13px;color:#000;transform:scaleX(0.885);transform-origin:100% 0">1E+99</div>
<div class="t g" style="right:723.5px;top:364.5px;font-size:13px;color:#000;transform:scaleX(0.98);transform-origin:100% 0">1</div>
<div class="t g" style="right:659.5px;top:364.5px;font-size:13px;color:#000;transform:scaleX(0.98);transform-origin:100% 0">1</div>
<div class="t g" style="right:595.5px;top:364.5px;font-size:13px;color:#000;transform:scaleX(0.98);transform-origin:100% 0">1</div>
<div class="t g" style="right:531.5px;top:364.5px;font-size:13px;color:#000;transform:scaleX(0.98);transform-origin:100% 0">1</div>
<div class="t g" style="right:1006.5px;top:384.5px;font-size:13px;color:#000;transform:scaleX(0.98);transform-origin:100% 0">-128</div>
<div class="t g" style="right:933.5px;top:384.5px;font-size:13px;color:#000;transform:scaleX(0.885);transform-origin:100% 0">1E+99</div>
<div class="t g" style="right:860.5px;top:384.5px;font-size:13px;color:#000;transform:scaleX(0.885);transform-origin:100% 0">1E+99</div>
<div class="t g" style="right:787.5px;top:384.5px;font-size:13px;color:#000;transform:scaleX(0.885);transform-origin:100% 0">1E+99</div>
<div class="t g" style="right:723.5px;top:384.5px;font-size:13px;color:#000;transform:scaleX(0.98);transform-origin:100% 0">0</div>
<div class="t g" style="right:659.5px;top:384.5px;font-size:13px;color:#000;transform:scaleX(0.98);transform-origin:100% 0">1</div>
<div class="t g" style="right:595.5px;top:384.5px;font-size:13px;color:#000;transform:scaleX(0.98);transform-origin:100% 0">0</div>
<div class="t g" style="right:531.5px;top:384.5px;font-size:13px;color:#000;transform:scaleX(0.98);transform-origin:100% 0">0</div>
<div class="t g" style="right:1006.5px;top:404.5px;font-size:13px;color:#000;transform:scaleX(0.98);transform-origin:100% 0">-128</div>
<div class="t g" style="right:933.5px;top:404.5px;font-size:13px;color:#000;transform:scaleX(0.885);transform-origin:100% 0">1E+99</div>
<div class="t g" style="right:860.5px;top:404.5px;font-size:13px;color:#000;transform:scaleX(0.885);transform-origin:100% 0">1E+99</div>
<div class="t g" style="right:787.5px;top:404.5px;font-size:13px;color:#000;transform:scaleX(0.885);transform-origin:100% 0">1E+99</div>
<div class="t g" style="right:723.5px;top:404.5px;font-size:13px;color:#000;transform:scaleX(0.98);transform-origin:100% 0">0</div>
<div class="t g" style="right:659.5px;top:404.5px;font-size:13px;color:#000;transform:scaleX(0.98);transform-origin:100% 0">0</div>
<div class="t g" style="right:595.5px;top:404.5px;font-size:13px;color:#000;transform:scaleX(0.98);transform-origin:100% 0">0</div>
<div class="t g" style="right:531.5px;top:404.5px;font-size:13px;color:#000;transform:scaleX(0.98);transform-origin:100% 0">1</div>
<div class="t g" style="right:1006.5px;top:424.5px;font-size:13px;color:#000;transform:scaleX(0.98);transform-origin:100% 0">-128</div>
<div class="t g" style="right:933.5px;top:424.5px;font-size:13px;color:#000;transform:scaleX(0.885);transform-origin:100% 0">1E+99</div>
<div class="t g" style="right:860.5px;top:424.5px;font-size:13px;color:#000;transform:scaleX(0.885);transform-origin:100% 0">1E+99</div>
<div class="t g" style="right:787.5px;top:424.5px;font-size:13px;color:#000;transform:scaleX(0.885);transform-origin:100% 0">1E+99</div>
<div class="t g" style="right:723.5px;top:424.5px;font-size:13px;color:#000;transform:scaleX(0.98);transform-origin:100% 0">0</div>
<div class="t g" style="right:659.5px;top:424.5px;font-size:13px;color:#000;transform:scaleX(0.98);transform-origin:100% 0">1</div>
<div class="t g" style="right:595.5px;top:424.5px;font-size:13px;color:#000;transform:scaleX(0.98);transform-origin:100% 0">1</div>
<div class="t g" style="right:531.5px;top:424.5px;font-size:13px;color:#000;transform:scaleX(0.98);transform-origin:100% 0">0</div>
<div class="t g" style="right:1006.5px;top:444.5px;font-size:13px;color:#000;transform:scaleX(0.885);transform-origin:100% 0">1E+99</div>
<div class="t g" style="right:933.5px;top:444.5px;font-size:13px;color:#000;transform:scaleX(0.885);transform-origin:100% 0">1E+99</div>
<div class="t g" style="right:860.5px;top:444.5px;font-size:13px;color:#000;transform:scaleX(0.885);transform-origin:100% 0">1E+99</div>
<div class="t g" style="right:787.5px;top:444.5px;font-size:13px;color:#000;transform:scaleX(0.885);transform-origin:100% 0">1E+99</div>
<div class="t g" style="right:723.5px;top:444.5px;font-size:13px;color:#000;transform:scaleX(0.98);transform-origin:100% 0">0</div>
<div class="t g" style="right:659.5px;top:444.5px;font-size:13px;color:#000;transform:scaleX(0.98);transform-origin:100% 0">0</div>
<div class="t g" style="right:595.5px;top:444.5px;font-size:13px;color:#000;transform:scaleX(0.98);transform-origin:100% 0">1</div>
<div class="t g" style="right:531.5px;top:444.5px;font-size:13px;color:#000;transform:scaleX(0.98);transform-origin:100% 0">0</div>
<div class="t g" style="right:1006.5px;top:464.5px;font-size:13px;color:#000;transform:scaleX(0.885);transform-origin:100% 0">1E+99</div>
<div class="t g" style="right:933.5px;top:464.5px;font-size:13px;color:#000;transform:scaleX(0.885);transform-origin:100% 0">1E+99</div>
<div class="t g" style="right:860.5px;top:464.5px;font-size:13px;color:#000;transform:scaleX(0.885);transform-origin:100% 0">1E+99</div>
<div class="t g" style="right:787.5px;top:464.5px;font-size:13px;color:#000;transform:scaleX(0.885);transform-origin:100% 0">1E+99</div>
<div class="t g" style="right:723.5px;top:464.5px;font-size:13px;color:#000;transform:scaleX(0.98);transform-origin:100% 0">1</div>
<div class="t g" style="right:659.5px;top:464.5px;font-size:13px;color:#000;transform:scaleX(0.98);transform-origin:100% 0">1</div>
<div class="t g" style="right:595.5px;top:464.5px;font-size:13px;color:#000;transform:scaleX(0.98);transform-origin:100% 0">1</div>
<div class="t g" style="right:531.5px;top:464.5px;font-size:13px;color:#000;transform:scaleX(0.98);transform-origin:100% 0">0</div>
<div class="t g" style="right:1006.5px;top:484.5px;font-size:13px;color:#000;transform:scaleX(0.98);transform-origin:100% 0">73</div>
<div class="t g" style="right:723.5px;top:484.5px;font-size:13px;color:#000;transform:scaleX(0.98);transform-origin:100% 0">0</div>
<div class="t g" style="right:659.5px;top:484.5px;font-size:13px;color:#000;transform:scaleX(0.98);transform-origin:100% 0">0</div>
<div class="t g" style="right:595.5px;top:484.5px;font-size:13px;color:#000;transform:scaleX(0.98);transform-origin:100% 0">1</div>
<div class="t g" style="right:531.5px;top:484.5px;font-size:13px;color:#000;transform:scaleX(0.98);transform-origin:100% 0">0</div>
<div class="t g" style="right:1006.5px;top:504.5px;font-size:13px;color:#000;transform:scaleX(0.98);transform-origin:100% 0">73</div>
<div class="t g" style="right:933.5px;top:504.5px;font-size:13px;color:#000;transform:scaleX(0.98);transform-origin:100% 0">25.1</div>
<div class="t g" style="right:723.5px;top:504.5px;font-size:13px;color:#000;transform:scaleX(0.98);transform-origin:100% 0">0</div>
<div class="t g" style="right:659.5px;top:504.5px;font-size:13px;color:#000;transform:scaleX(0.98);transform-origin:100% 0">0</div>
<div class="t g" style="right:595.5px;top:504.5px;font-size:13px;color:#000;transform:scaleX(0.98);transform-origin:100% 0">1</div>
<div class="t g" style="right:531.5px;top:504.5px;font-size:13px;color:#000;transform:scaleX(0.98);transform-origin:100% 0">0</div>
<div class="t g" style="right:1006.5px;top:524.5px;font-size:13px;color:#000;transform:scaleX(0.98);transform-origin:100% 0">73</div>
<div class="t g" style="right:860.5px;top:524.5px;font-size:13px;color:#000;transform:scaleX(0.98);transform-origin:100% 0">-39.6</div>
<div class="t g" style="right:723.5px;top:524.5px;font-size:13px;color:#000;transform:scaleX(0.98);transform-origin:100% 0">0</div>
<div class="t g" style="right:659.5px;top:524.5px;font-size:13px;color:#000;transform:scaleX(0.98);transform-origin:100% 0">0</div>
<div class="t g" style="right:595.5px;top:524.5px;font-size:13px;color:#000;transform:scaleX(0.98);transform-origin:100% 0">1</div>
<div class="t g" style="right:531.5px;top:524.5px;font-size:13px;color:#000;transform:scaleX(0.98);transform-origin:100% 0">0</div>
<div class="t g" style="right:1006.5px;top:544.5px;font-size:13px;color:#000;transform:scaleX(0.98);transform-origin:100% 0">0</div>
<div class="t g" style="right:787.5px;top:544.5px;font-size:13px;color:#000;transform:scaleX(0.98);transform-origin:100% 0">101.7</div>
<div class="t g" style="right:723.5px;top:544.5px;font-size:13px;color:#000;transform:scaleX(0.98);transform-origin:100% 0">0</div>
<div class="t g" style="right:659.5px;top:544.5px;font-size:13px;color:#000;transform:scaleX(0.98);transform-origin:100% 0">0</div>
<div class="t g" style="right:595.5px;top:544.5px;font-size:13px;color:#000;transform:scaleX(0.98);transform-origin:100% 0">1</div>
<div class="t g" style="right:531.5px;top:544.5px;font-size:13px;color:#000;transform:scaleX(0.98);transform-origin:100% 0">0</div>
<div class="t g" style="right:1006.5px;top:564.5px;font-size:13px;color:#000;transform:scaleX(0.98);transform-origin:100% 0">73</div>
<div class="t g" style="right:723.5px;top:564.5px;font-size:13px;color:#000;transform:scaleX(0.98);transform-origin:100% 0">0</div>
<div class="t g" style="right:659.5px;top:564.5px;font-size:13px;color:#000;transform:scaleX(0.98);transform-origin:100% 0">0</div>
<div class="t g" style="right:595.5px;top:564.5px;font-size:13px;color:#000;transform:scaleX(0.98);transform-origin:100% 0">0</div>
<div class="t g" style="right:531.5px;top:564.5px;font-size:13px;color:#000;transform:scaleX(0.98);transform-origin:100% 0">1</div>
<div class="t g" style="right:933.5px;top:584.5px;font-size:13px;color:#000;transform:scaleX(0.98);transform-origin:100% 0">25.6</div>
<div class="t g" style="right:723.5px;top:584.5px;font-size:13px;color:#000;transform:scaleX(0.98);transform-origin:100% 0">1</div>
<div class="t g" style="right:659.5px;top:584.5px;font-size:13px;color:#000;transform:scaleX(0.98);transform-origin:100% 0">1</div>
<div class="t g" style="right:595.5px;top:584.5px;font-size:13px;color:#000;transform:scaleX(0.98);transform-origin:100% 0">0</div>
<div class="t g" style="right:531.5px;top:584.5px;font-size:13px;color:#000;transform:scaleX(0.98);transform-origin:100% 0">0</div>
<div class="t g" style="right:1006.5px;top:604.5px;font-size:13px;color:#000;transform:scaleX(0.98);transform-origin:100% 0">73</div>
<div class="t g" style="right:860.5px;top:604.5px;font-size:13px;color:#000;transform:scaleX(0.98);transform-origin:100% 0">-39.6</div>
<div class="t g" style="right:723.5px;top:604.5px;font-size:13px;color:#000;transform:scaleX(0.98);transform-origin:100% 0">0</div>
<div class="t g" style="right:659.5px;top:604.5px;font-size:13px;color:#000;transform:scaleX(0.98);transform-origin:100% 0">0</div>
<div class="t g" style="right:595.5px;top:604.5px;font-size:13px;color:#000;transform:scaleX(0.98);transform-origin:100% 0">0</div>
<div class="t g" style="right:531.5px;top:604.5px;font-size:13px;color:#000;transform:scaleX(0.98);transform-origin:100% 0">0</div>
<div class="t g" style="right:1006.5px;top:624.5px;font-size:13px;color:#000;transform:scaleX(0.98);transform-origin:100% 0">0</div>
<div class="t g" style="right:787.5px;top:624.5px;font-size:13px;color:#000;transform:scaleX(0.98);transform-origin:100% 0">101.6</div>
<div class="t g" style="right:723.5px;top:624.5px;font-size:13px;color:#000;transform:scaleX(0.98);transform-origin:100% 0">1</div>
<div class="t g" style="right:659.5px;top:624.5px;font-size:13px;color:#000;transform:scaleX(0.98);transform-origin:100% 0">0</div>
<div class="t g" style="right:595.5px;top:624.5px;font-size:13px;color:#000;transform:scaleX(0.98);transform-origin:100% 0">1</div>
<div class="t g" style="right:531.5px;top:624.5px;font-size:13px;color:#000;transform:scaleX(0.98);transform-origin:100% 0">1</div>
<div class="t g" style="right:1006.5px;top:644.5px;font-size:13px;color:#000;transform:scaleX(0.98);transform-origin:100% 0">0</div>
<div class="t g" style="right:723.5px;top:644.5px;font-size:13px;color:#000;transform:scaleX(0.98);transform-origin:100% 0">0</div>
<div class="t g" style="right:659.5px;top:644.5px;font-size:13px;color:#000;transform:scaleX(0.98);transform-origin:100% 0">0</div>
<div class="t g" style="right:595.5px;top:644.5px;font-size:13px;color:#000;transform:scaleX(0.98);transform-origin:100% 0">0</div>
<div class="t g" style="right:531.5px;top:644.5px;font-size:13px;color:#000;transform:scaleX(0.98);transform-origin:100% 0">1</div>
<div class="t g" style="right:1006.5px;top:665.0px;font-size:13px;color:#000;transform:scaleX(0.98);transform-origin:100% 0">-73</div>
<div class="t g" style="right:723.5px;top:665.0px;font-size:13px;color:#000;transform:scaleX(0.98);transform-origin:100% 0">1</div>
<div class="t g" style="right:659.5px;top:665.0px;font-size:13px;color:#000;transform:scaleX(0.98);transform-origin:100% 0">1</div>
<div class="t g" style="right:595.5px;top:665.0px;font-size:13px;color:#000;transform:scaleX(0.98);transform-origin:100% 0">0</div>
<div class="t g" style="right:531.5px;top:665.0px;font-size:13px;color:#000;transform:scaleX(0.98);transform-origin:100% 0">1</div>
<div class="r" style="left:641px;top:260px;width:294px;height:1px;background:#ff0000"></div>
<div class="r" style="left:641px;top:260px;width:3px;height:21px;background:#ff0000"></div>
<div class="r" style="left:934px;top:260px;width:258px;height:1px;background:#00b050"></div>
<div class="r" style="left:933px;top:260px;width:3px;height:21px;background:#00b050"></div>
<div class="r" style="left:1189px;top:260px;width:3px;height:21px;background:#00b050"></div>
<div class="r" style="left:641px;top:281px;width:3px;height:402px;background:#3c3c3c"></div>
<div class="r" style="left:641px;top:680px;width:294px;height:3px;background:#3c3c3c"></div>
<div class="r" style="left:933px;top:281px;width:3px;height:402px;background:#00b0f0"></div>
<div class="r" style="left:1189px;top:281px;width:3px;height:402px;background:#00b0f0"></div>
<div class="r" style="left:934px;top:680px;width:258px;height:3px;background:#00b0f0"></div>
<svg style="left:0;top:0" width="1719" height="900" viewBox="0 0 1719 900"><defs><filter id="sh" x="-20%" y="-20%" width="140%" height="140%"><feDropShadow dx="2" dy="3.5" stdDeviation="2.2" flood-color="#000" flood-opacity="0.5"/></filter><filter id="tsh" x="-10%" y="-30%" width="120%" height="160%"><feDropShadow dx="1.5" dy="3" stdDeviation="1.8" flood-color="#000" flood-opacity="0.55"/></filter></defs><path d="M835.7 628.0 L1207.5 803.7 L1203.0 813.2 L1237.0 811.5 L1216.7 784.2 L1212.2 793.7 L840.3 618.0 A5.5 5.5 0 0 0 835.7 628.0 Z" fill="#0bab8c" filter="url(#sh)"/><rect x="651.5" y="249.7" width="275.5" height="42.8" fill="none" stroke="#fb3c3f" stroke-width="3" filter="url(#sh)"/><rect x="942.9" y="246" width="246.2" height="57.6" fill="none" stroke="#fb3c3f" stroke-width="3" filter="url(#sh)"/><rect x="996.5" y="323.5" width="159.7" height="315" fill="none" stroke="#6a2a8e" stroke-width="3" filter="url(#sh)"/><rect x="766.2" y="459.6" width="123" height="185.5" rx="16" fill="none" stroke="#f4a70f" stroke-width="3" filter="url(#sh)"/><path d="M732.5 299.5 L521.3 760.4 L513.1 756.7 L514.2 789.1 L539.5 768.8 L531.3 765.0 L742.5 304.1 A5.5 5.5 0 0 0 732.5 299.5 Z" fill="#f4a70f" filter="url(#sh)"/><path d="M971.7 306.7 L541.1 758.9 L534.6 752.7 L525.1 783.7 L555.6 772.7 L549.1 766.5 L979.7 314.3 A5.5 5.5 0 0 0 971.7 306.7 Z" fill="#f4a70f" filter="url(#sh)"/><path d="M1077.1 394.9 L1336.9 600.6 L1331.0 608.1 L1362.7 614.7 L1349.0 585.3 L1343.1 592.8 L1083.3 387.1 A5.0 5.0 0 0 0 1077.1 394.9 Z" fill="#f4a70f" filter="url(#sh)"/></svg>
<div style="position:absolute;white-space:nowrap;font-family:'Liberation Sans',sans-serif;font-weight:bold;color:#111;font-size:16.5px;letter-spacing:0.6px;text-shadow:3.50px 0.00px 0.6px #fff,3.23px 1.34px 0.6px #fff,2.47px 2.47px 0.6px #fff,1.34px 3.23px 0.6px #fff,0.00px 3.50px 0.6px #fff,-1.34px 3.23px 0.6px #fff,-2.47px 2.47px 0.6px #fff,-3.23px 1.34px 0.6px #fff,-3.50px 0.00px 0.6px #fff,-3.23px -1.34px 0.6px #fff,-2.47px -2.47px 0.6px #fff,-1.34px -3.23px 0.6px #fff,-0.00px -3.50px 0.6px #fff,1.34px -3.23px 0.6px #fff,2.47px -2.47px 0.6px #fff,3.23px -1.34px 0.6px #fff,1.85px 0.77px 0 #fff,0.77px 1.85px 0 #fff,-0.77px 1.85px 0 #fff,-1.85px 0.77px 0 #fff,-1.85px -0.77px 0 #fff,-0.77px -1.85px 0 #fff,0.77px -1.85px 0 #fff,1.85px -0.77px 0 #fff,2px 5px 4px rgba(0,0,0,0.55),3px 6px 5px rgba(0,0,0,0.3);left:392.5px;top:805.9px;line-height:22.8px;letter-spacing:0.6px">Please note that columns headings are repeated</div>
<div style="position:absolute;white-space:nowrap;font-family:'Liberation Sans',sans-serif;font-weight:bold;color:#111;font-size:16.5px;letter-spacing:0.6px;text-shadow:3.50px 0.00px 0.6px #fff,3.23px 1.34px 0.6px #fff,2.47px 2.47px 0.6px #fff,1.34px 3.23px 0.6px #fff,0.00px 3.50px 0.6px #fff,-1.34px 3.23px 0.6px #fff,-2.47px 2.47px 0.6px #fff,-3.23px 1.34px 0.6px #fff,-3.50px 0.00px 0.6px #fff,-3.23px -1.34px 0.6px #fff,-2.47px -2.47px 0.6px #fff,-1.34px -3.23px 0.6px #fff,-0.00px -3.50px 0.6px #fff,1.34px -3.23px 0.6px #fff,2.47px -2.47px 0.6px #fff,3.23px -1.34px 0.6px #fff,1.85px 0.77px 0 #fff,0.77px 1.85px 0 #fff,-0.77px 1.85px 0 #fff,-1.85px 0.77px 0 #fff,-1.85px -0.77px 0 #fff,-0.77px -1.85px 0 #fff,0.77px -1.85px 0 #fff,1.85px -0.77px 0 #fff,2px 5px 4px rgba(0,0,0,0.55),3px 6px 5px rgba(0,0,0,0.3);left:1393px;top:581.5px;line-height:22.8px;letter-spacing:0.6px">These data derived based on<br>columns from<br>1) PartPF/ Column H and<br>2) Results columns displayed in I,<br>J, K and L columns</div>
<div style="position:absolute;white-space:nowrap;font-family:'Liberation Sans',sans-serif;font-weight:bold;color:#111;font-size:16.5px;letter-spacing:0.6px;text-shadow:3.50px 0.00px 0.6px #fff,3.23px 1.34px 0.6px #fff,2.47px 2.47px 0.6px #fff,1.34px 3.23px 0.6px #fff,0.00px 3.50px 0.6px #fff,-1.34px 3.23px 0.6px #fff,-2.47px 2.47px 0.6px #fff,-3.23px 1.34px 0.6px #fff,-3.50px 0.00px 0.6px #fff,-3.23px -1.34px 0.6px #fff,-2.47px -2.47px 0.6px #fff,-1.34px -3.23px 0.6px #fff,-0.00px -3.50px 0.6px #fff,1.34px -3.23px 0.6px #fff,2.47px -2.47px 0.6px #fff,3.23px -1.34px 0.6px #fff,1.85px 0.77px 0 #fff,0.77px 1.85px 0 #fff,-0.77px 1.85px 0 #fff,-1.85px 0.77px 0 #fff,-1.85px -0.77px 0 #fff,-0.77px -1.85px 0 #fff,0.77px -1.85px 0 #fff,1.85px -0.77px 0 #fff,2px 5px 4px rgba(0,0,0,0.55),3px 6px 5px rgba(0,0,0,0.3);left:1259px;top:827.5px;line-height:23.5px;letter-spacing:0.45px">These direct columns TEST_RESULTS from<br>a table.</div></body></html>
